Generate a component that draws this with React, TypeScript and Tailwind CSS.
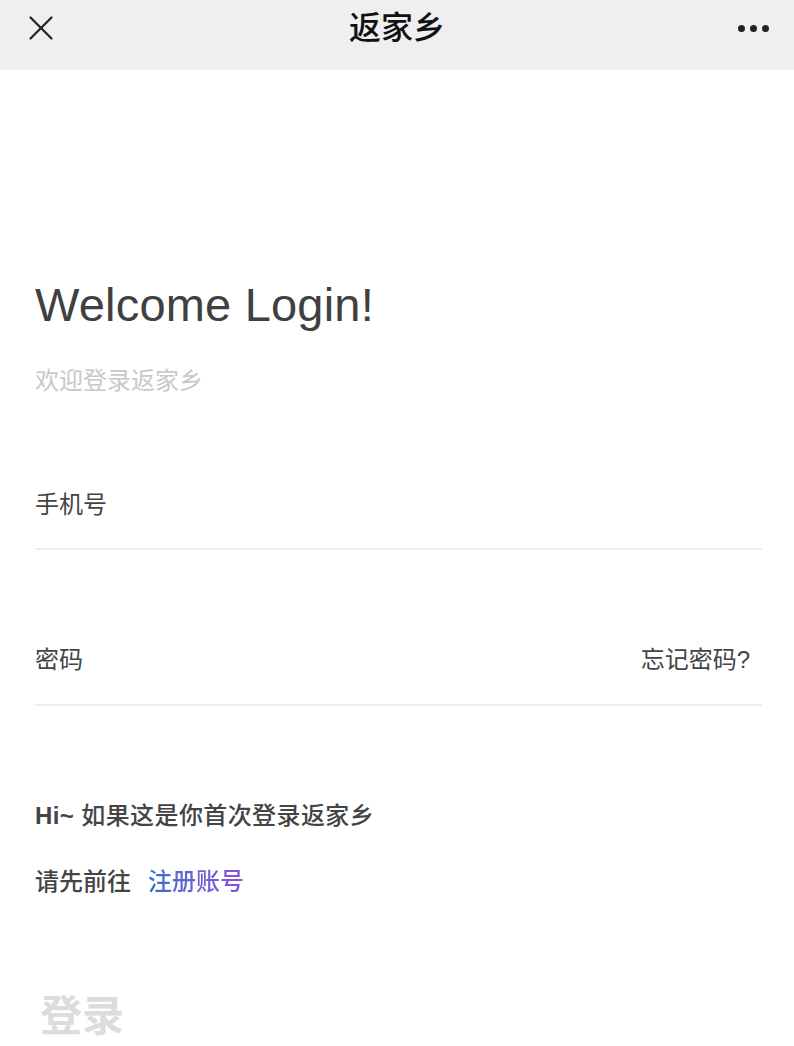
import { X } from 'lucide-react';

const font = { fontFamily: '"Liberation Sans", "Noto Sans CJK SC", sans-serif' };

export default function App() {
  return (
    <div className="w-[794px] h-[1046px] bg-white overflow-hidden" style={font}>
      {/* Top bar */}
      <div className="h-[70px] bg-[#efefef] flex items-center justify-between pl-[20px] pr-[24px]">
        <X className="w-[42px] h-[42px] text-[#222] -mt-[14px]" strokeWidth={1.3} />
        <div className="text-[32px] leading-none text-[#111] font-medium -mt-[14px] -ml-[6px]">返家乡</div>
        <div className="flex gap-[5px] -mt-[14px] pr-[1px]">
          <span className="w-[7px] h-[7px] rounded-full bg-[#222]" />
          <span className="w-[7px] h-[7px] rounded-full bg-[#222]" />
          <span className="w-[7px] h-[7px] rounded-full bg-[#222]" />
        </div>
      </div>

      <div className="px-[35px] pr-[32px]">
        <h1 className="mt-[207px] text-[47px] leading-[56px] tracking-[0.2px] text-[#404040]">Welcome Login!</h1>
        <p className="mt-[32px] text-[24px] leading-[32px] text-[#c8c8c8]">欢迎登录返家乡</p>

        <div className="mt-[92px] border-b-2 border-[#ededed] h-[61px] flex items-start">
          <span className="text-[24px] leading-[32px] text-[#444]">手机号</span>
        </div>

        <div className="mt-[92px] border-b-2 border-[#ededed] h-[64px] flex items-start justify-between pr-[12px]">
          <span className="text-[24px] leading-[32px] text-[#444] mt-[2px]">密码</span>
          <span className="text-[24px] leading-[32px] text-[#444] mt-[2px]">忘记密码?</span>
        </div>

        <p className="mt-[94px] text-[24px] leading-[32px] tracking-[0.4px] text-[#444] font-medium">
          <span className="font-bold">Hi~</span> 如果这是你首次登录返家乡
        </p>
        <p className="mt-[34px] text-[24px] leading-[32px] text-[#444] font-medium">
          请先前往
          <span className="ml-[17px] bg-gradient-to-r from-[#2f6fd0] to-[#8a4fd8] bg-clip-text text-transparent">注册账号</span>
        </p>

        <div className="mt-[94px] ml-[5px] text-[42px] leading-[50px] text-[#dcdcdc] font-bold">登录</div>
      </div>
    </div>
  );
}
